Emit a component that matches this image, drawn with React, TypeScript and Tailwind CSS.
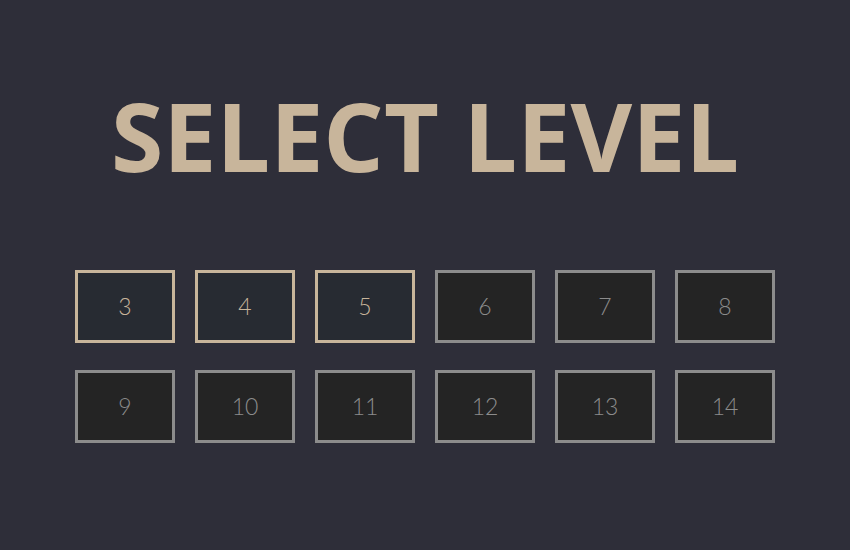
const levels = [3, 4, 5, 6, 7, 8, 9, 10, 11, 12, 13, 14];
const unlocked = 5;

export default function App() {
    return (
        <div className="w-[850px] h-[550px] bg-[#2e2e39] flex flex-col items-center" style={{ fontFamily: '"Open Sans", sans-serif' }}>
            <h1 className="mt-[75px] text-[95px] leading-[120px] font-bold text-[#c8b59b] tracking-[0px]">
                SELECT LEVEL
            </h1>
            <div className="mt-[75px] grid grid-cols-6 gap-x-[20px] gap-y-[27px]">
                {levels.map((n) => {
                    const open = n <= unlocked;
                    return (
                        <button
                            key={n}
                            className={
                                open
                                    ? "w-[100px] h-[73px] border-[3px] border-[#c8b59b] bg-[#272b32] text-[#c8b59b] flex items-center justify-center text-[23px] font-light"
                                    : "w-[100px] h-[73px] border-[3px] border-[#8c8c8c] bg-[#242424] text-[#8c8c8c] flex items-center justify-center text-[23px] font-light"
                            }
                            style={{ fontFamily: 'Lato, "Open Sans", sans-serif' }}
                        >
                            {n}
                        </button>
                    );
                })}
            </div>
        </div>
    );
}
